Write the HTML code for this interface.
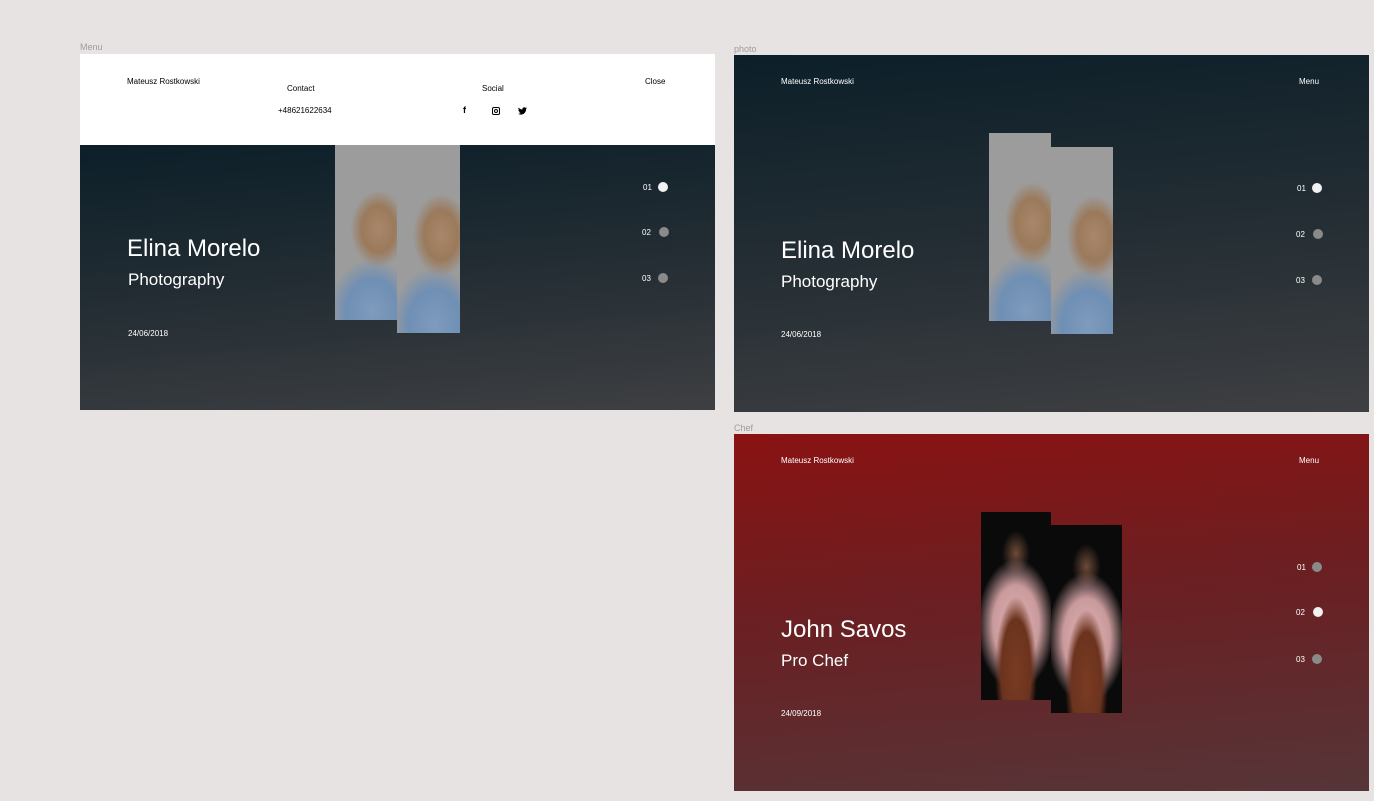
<!DOCTYPE html>
<html><head><style>
*{margin:0;padding:0;box-sizing:border-box}
body{width:1374px;height:801px;background:#e7e3e2;position:relative;overflow:hidden;font-family:"Liberation Sans",sans-serif}
.a{position:absolute}
.lbl{font-size:9px;color:#a09c9b}
.dark{background:linear-gradient(175deg,#0c1f29 0%,#232d33 50%,#3e3f42 100%)}
.red{background:linear-gradient(175deg,#8a1212 0%,#6b1f22 45%,#553538 100%)}
.w{color:#fff}
.s8{font-size:8px}
.name{font-size:24px;color:#fff}
.sub{font-size:17px;color:#fff}
.dot{width:10px;height:10px;border-radius:50%;background:#8a8a8a}
.on{background:#f2f2f2}
.ph{background:
 radial-gradient(ellipse 45% 22% at 70% 48%,#a8876a 0%,#9b7a5c 60%,rgba(155,122,92,0) 100%),
 radial-gradient(ellipse 70% 30% at 60% 95%,#7f9bbd 0%,#6f8fb4 60%,rgba(111,143,180,0) 100%),
 #9c9c9c;overflow:hidden}
.ch{background:
 radial-gradient(ellipse 30% 40% at 50% 85%,#7a3b22 0%,#6b331e 70%,rgba(107,51,30,0) 100%),
 radial-gradient(ellipse 55% 35% at 50% 60%,#e2b3b5 0%,#c99a9c 60%,rgba(0,0,0,0) 100%),
 radial-gradient(ellipse 20% 12% at 50% 22%,#6d4a38 0%,rgba(0,0,0,0) 100%),
 #0a0a0a}
</style></head><body>
<div class="a lbl" style="left:80px;top:42px">Menu</div>
<div class="a lbl" style="left:734px;top:44px">photo</div>
<div class="a lbl" style="left:734px;top:423px">Chef</div>

<!-- Menu frame -->
<div class="a" style="left:80px;top:54px;width:635px;height:91px;background:#fff"></div>
<div class="a dark" style="left:80px;top:145px;width:635px;height:265px"></div>
<div class="a s8" style="left:127px;top:77px">Mateusz Rostkowski</div>
<div class="a s8" style="left:287px;top:84px">Contact</div>
<div class="a s8" style="left:278px;top:106px">+48621622634</div>
<div class="a s8" style="left:482px;top:84px">Social</div>
<div class="a" style="left:463px;top:105px;font-size:9px;font-weight:bold">f</div>
<div class="a" style="left:492px;top:107px;width:8px;height:8px;border:1px solid #000;border-radius:2px"><div style="margin:1px auto;width:4px;height:4px;border:1px solid #000;border-radius:50%"></div></div>
<svg class="a" style="left:518px;top:107px" width="9" height="8" viewBox="0 0 24 20"><path d="M24 2.4a10 10 0 0 1-2.8.8A5 5 0 0 0 23.3.4a10 10 0 0 1-3.1 1.2A4.9 4.9 0 0 0 11.8 6 14 14 0 0 1 1.7.9a4.9 4.9 0 0 0 1.5 6.6A4.9 4.9 0 0 1 1 6.9a4.9 4.9 0 0 0 3.9 4.8 5 5 0 0 1-2.2.1 4.9 4.9 0 0 0 4.6 3.4A9.9 9.9 0 0 1 0 17.3 14 14 0 0 0 7.5 19.5c9 0 14-7.5 14-14v-.6A10 10 0 0 0 24 2.4z"/></svg>
<div class="a s8" style="left:645px;top:77px">Close</div>
<div class="a ph" style="left:335px;top:145px;width:62px;height:175px"></div>
<div class="a ph" style="left:397px;top:145px;width:63px;height:188px"></div>
<div class="a name" style="left:127px;top:235px">Elina Morelo</div>
<div class="a sub" style="left:128px;top:270px">Photography</div>
<div class="a s8 w" style="left:128px;top:329px">24/06/2018</div>
<div class="a s8 w" style="left:643px;top:183px">01</div><div class="a dot on" style="left:658px;top:182px"></div>
<div class="a s8 w" style="left:642px;top:228px">02</div><div class="a dot" style="left:659px;top:227px"></div>
<div class="a s8 w" style="left:642px;top:274px">03</div><div class="a dot" style="left:658px;top:273px"></div>

<!-- Photo frame -->
<div class="a dark" style="left:734px;top:55px;width:635px;height:357px"></div>
<div class="a s8 w" style="left:781px;top:77px">Mateusz Rostkowski</div>
<div class="a s8 w" style="left:1299px;top:77px">Menu</div>
<div class="a ph" style="left:989px;top:133px;width:62px;height:188px"></div>
<div class="a ph" style="left:1051px;top:147px;width:62px;height:187px"></div>
<div class="a name" style="left:781px;top:237px">Elina Morelo</div>
<div class="a sub" style="left:781px;top:272px">Photography</div>
<div class="a s8 w" style="left:781px;top:330px">24/06/2018</div>
<div class="a s8 w" style="left:1297px;top:184px">01</div><div class="a dot on" style="left:1312px;top:183px"></div>
<div class="a s8 w" style="left:1296px;top:230px">02</div><div class="a dot" style="left:1313px;top:229px"></div>
<div class="a s8 w" style="left:1296px;top:276px">03</div><div class="a dot" style="left:1312px;top:275px"></div>

<!-- Chef frame -->
<div class="a red" style="left:734px;top:434px;width:635px;height:357px"></div>
<div class="a s8 w" style="left:781px;top:456px">Mateusz Rostkowski</div>
<div class="a s8 w" style="left:1299px;top:456px">Menu</div>
<div class="a ch" style="left:981px;top:512px;width:70px;height:188px;background-position:0 0;"></div>
<div class="a ch" style="left:1051px;top:525px;width:71px;height:188px"></div>
<div class="a name" style="left:781px;top:616px">John Savos</div>
<div class="a sub" style="left:781px;top:651px">Pro Chef</div>
<div class="a s8 w" style="left:781px;top:709px">24/09/2018</div>
<div class="a s8 w" style="left:1297px;top:563px">01</div><div class="a dot" style="left:1312px;top:562px"></div>
<div class="a s8 w" style="left:1296px;top:608px">02</div><div class="a dot on" style="left:1313px;top:607px"></div>
<div class="a s8 w" style="left:1296px;top:655px">03</div><div class="a dot" style="left:1312px;top:654px"></div>
</body></html>
